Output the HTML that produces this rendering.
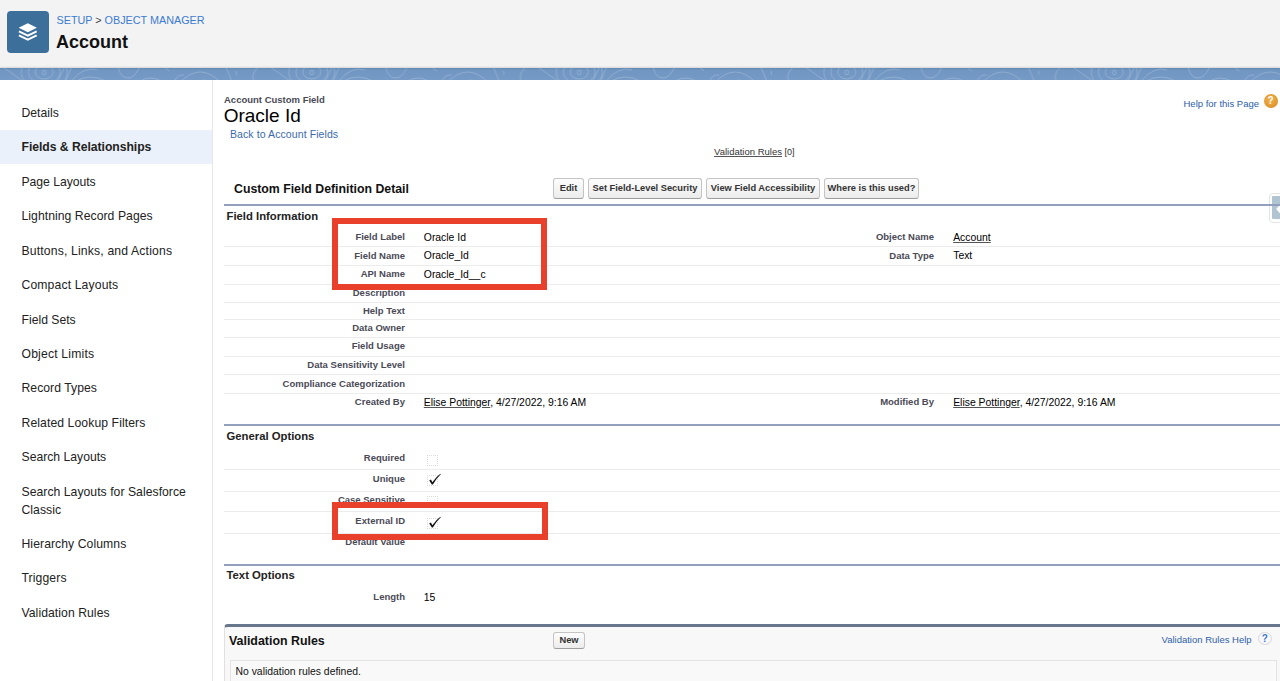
<!DOCTYPE html>
<html><head><meta charset="utf-8">
<style>
*{margin:0;padding:0;box-sizing:border-box}
html,body{width:1280px;height:681px;overflow:hidden;background:#fff;font-family:"Liberation Sans",sans-serif;color:#000}
.abs{position:absolute;white-space:nowrap}
#hdr{position:absolute;left:0;top:0;width:1280px;height:68px;background:#f3f3f3}
#icon{position:absolute;left:7px;top:11px;width:42px;height:42px;border-radius:4px;background:#3d6f9b}
#crumb{left:56.5px;top:14px;font-size:10.8px;color:#3b7bd0}
#crumb span{color:#444}
#title{left:56px;top:31.5px;font-size:18px;font-weight:bold;color:#111}
#band{position:absolute;left:0;top:68px;width:1280px;height:12px;box-shadow:0 -1px 1.5px rgba(0,0,0,0.12);background:linear-gradient(#6488b4,#7096c2 2px,#759ac5);overflow:hidden}
#nav{position:absolute;left:0;top:80px;width:213px;height:601px;border-right:1px solid #e6e6e6;background:#fff}
.ni{position:absolute;left:21.5px;font-size:12.2px;color:#222;white-space:nowrap;line-height:18px}
#sel{position:absolute;left:0;top:50px;width:212px;height:34px;background:#ebf1fb}
.lbl{position:absolute;font-size:9.5px;font-weight:bold;color:#4a4a56;text-align:right;white-space:nowrap}
.val{position:absolute;font-size:10.4px;color:#000;white-space:nowrap}
.rl{position:absolute;left:224px;width:1056px;height:1px;background:#ececec}
.btn{position:absolute;top:178px;height:20.5px;border:1px solid #c4c4c4;border-bottom-color:#9e9e9e;border-radius:3px;background:linear-gradient(#fdfdfd,#ececec);font-size:9.3px;font-weight:bold;color:#333;text-align:center;line-height:18px;white-space:nowrap}
.sec{position:absolute;font-size:11.3px;font-weight:bold;color:#222;white-space:nowrap}
.bl{position:absolute;left:224px;width:1056px;height:2px;background:#90a0bd;z-index:2}
.cb{position:absolute;width:11px;height:11px;border:1px dotted #dadada}
.red{position:absolute;border:6px solid #e8402a}
a,.u{text-decoration:underline;text-decoration-color:#555}
</style></head><body>
<div id="hdr">
  <div id="icon">
    <svg width="42" height="42" viewBox="0 0 42 42" style="position:absolute;left:0;top:0">
      <path d="M20.8 12.2 L29.9 16.7 L20.8 21.2 L11.7 16.7 Z" fill="#fff"/>
      <path d="M11.9 20.3 L20.8 24.7 L29.7 20.3" fill="none" stroke="#fff" stroke-width="1.9"/>
      <path d="M11.9 24.3 L20.8 28.7 L29.7 24.3" fill="none" stroke="#fff" stroke-width="1.9"/>
    </svg>
  </div>
  <div id="crumb" class="abs">SETUP <span>&gt;</span> OBJECT MANAGER</div>
  <div id="title" class="abs">Account</div>
</div>
<div id="band"><svg width="1280" height="12" style="position:absolute;left:0;top:0"><defs><pattern id="sw" x="44.25" y="0" width="267.5" height="12" patternUnits="userSpaceOnUse"><g fill="none" stroke="rgba(255,255,255,0.22)" stroke-width="0.9"><ellipse cx="0" cy="4.5" rx="1.8" ry="2.3"/><ellipse cx="0" cy="4" rx="9" ry="7"/><ellipse cx="0" cy="4" rx="16" ry="12"/><ellipse cx="0" cy="4" rx="23" ry="18"/>
<ellipse cx="267.5" cy="4.5" rx="1.8" ry="2.3"/><ellipse cx="267.5" cy="4" rx="9" ry="7"/><ellipse cx="267.5" cy="4" rx="16" ry="12"/><ellipse cx="267.5" cy="4" rx="23" ry="18"/>
<path d="M14 12 L20 0 M22 12 L27 0 M28 12 Q40 -2 53 2 M32 13 Q46 5 61 13 M74 -1 Q76 10 84 10 Q90 10 95 0 M96 13 Q106 7 117 13 M121 0 L125 3 M130 13 Q134 6 140 7 M136 14 Q156 -6 176 14 M150 16 Q160 8 168 16 M182 0 L187 12 M192 3 L192 7 M213 0 Q207 6 209 12 M226 -1 L246 13"/></g></pattern></defs><rect width="1280" height="12" fill="url(#sw)"/></svg></div>
<div id="nav">
  <div id="sel"></div>
  <div class="ni" style="top:24px;letter-spacing:0.01px">Details</div>
  <div class="ni" style="top:58px;font-weight:bold;letter-spacing:-0.04px">Fields &amp; Relationships</div>
  <div class="ni" style="top:93px;letter-spacing:-0.04px">Page Layouts</div>
  <div class="ni" style="top:127px;letter-spacing:0.05px">Lightning Record Pages</div>
  <div class="ni" style="top:162px;letter-spacing:0.16px">Buttons, Links, and Actions</div>
  <div class="ni" style="top:196px;letter-spacing:0.13px">Compact Layouts</div>
  <div class="ni" style="top:231px;letter-spacing:0px">Field Sets</div>
  <div class="ni" style="top:265px;letter-spacing:0.18px">Object Limits</div>
  <div class="ni" style="top:299px;letter-spacing:0.04px">Record Types</div>
  <div class="ni" style="top:334px;letter-spacing:0.09px">Related Lookup Filters</div>
  <div class="ni" style="top:368px;letter-spacing:0px">Search Layouts</div>
  <div class="ni" style="top:403px;letter-spacing:0.04px">Search Layouts for Salesforce<br>Classic</div>
  <div class="ni" style="top:455px;letter-spacing:0.07px">Hierarchy Columns</div>
  <div class="ni" style="top:489px;letter-spacing:0.11px">Triggers</div>
  <div class="ni" style="top:524px;letter-spacing:0.06px">Validation Rules</div>
</div>

<!-- main -->
<div class="abs" style="left:224px;top:94px;font-size:9.5px;font-weight:bold;color:#4a4a56">Account Custom Field</div>
<div class="abs" style="left:223.7px;top:105px;font-size:19px;color:#000">Oracle Id</div>
<div class="abs" style="left:230px;top:128px;font-size:10.5px;letter-spacing:0.09px;color:#3a6aae">Back to Account Fields</div>
<div class="abs" style="left:1183.5px;top:98px;font-size:9.5px;color:#2c60a8">Help for this Page</div>
<div class="abs" style="left:1263.5px;top:93.7px;width:14px;height:14px;border-radius:50%;background:radial-gradient(circle at 45% 40%,#f2b04a,#e39a30 60%,#c9781a);color:#fff;font-size:10px;font-weight:bold;text-align:center;line-height:14px">?</div>
<div class="abs" style="left:714px;top:146px;font-size:9.5px;color:#333"><span class="u">Validation Rules</span> <span style="font-size:9px">[0]</span></div>

<div class="sec" style="left:234px;top:181.5px;font-size:12.3px;color:#111">Custom Field Definition Detail</div>
<div class="btn" style="left:553px;width:31px">Edit</div>
<div class="btn" style="left:588px;width:114px">Set Field-Level Security</div>
<div class="btn" style="left:706px;width:114px">View Field Accessibility</div>
<div class="btn" style="left:824px;width:95px">Where is this used?</div>
<div class="bl" style="top:204px"></div>

<div style="position:absolute;left:1268.5px;top:192.5px;width:14px;height:30px;border:1px solid #e4e4e4;border-radius:4px;background:#fff"></div>
<div style="position:absolute;left:1272px;top:196px;width:10px;height:23px;background:#b1c4d2;border-radius:1px"></div>
<svg style="position:absolute;left:1272px;top:196px" width="8" height="23"><path d="M8 8.5 L4.2 13 L8 17.5 Z" fill="#fff"/></svg>
<div class="sec" style="left:226.5px;top:210px">Field Information</div>

<div class="lbl" style="right:875px;top:231.4px">Field Label</div>
<div class="lbl" style="right:875px;top:249.5px">Field Name</div>
<div class="lbl" style="right:875px;top:268.1px">API Name</div>
<div class="lbl" style="right:875px;top:286.5px">Description</div>
<div class="lbl" style="right:875px;top:304.5px">Help Text</div>
<div class="lbl" style="right:875px;top:322.2px">Data Owner</div>
<div class="lbl" style="right:875px;top:340.4px">Field Usage</div>
<div class="lbl" style="right:875px;top:359.1px">Data Sensitivity Level</div>
<div class="lbl" style="right:875px;top:377.6px">Compliance Categorization</div>
<div class="lbl" style="right:875px;top:395.7px">Created By</div>
<div class="rl" style="top:246px"></div>
<div class="rl" style="top:265px"></div>
<div class="rl" style="top:284px"></div>
<div class="rl" style="top:302px"></div>
<div class="rl" style="top:319px"></div>
<div class="rl" style="top:337px"></div>
<div class="rl" style="top:356px"></div>
<div class="rl" style="top:374px"></div>
<div class="rl" style="top:393px"></div>
<div class="val" style="left:423.8px;top:232.3px">Oracle Id</div>
<div class="val" style="left:423.8px;top:250.4px">Oracle_Id</div>
<div class="val" style="left:423.8px;top:269px">Oracle_Id__c</div>
<div class="val" style="left:423.8px;top:396.6px"><span class="u">Elise Pottinger</span>, 4/27/2022, 9:16 AM</div>
<div class="lbl" style="right:346px;top:231.4px">Object Name</div>
<div class="lbl" style="right:346px;top:249.5px">Data Type</div>
<div class="lbl" style="right:346px;top:395.7px">Modified By</div>
<div class="val" style="left:953.2px;top:232.3px"><span class="u">Account</span></div>
<div class="val" style="left:953.2px;top:250.4px">Text</div>
<div class="val" style="left:953.2px;top:396.6px"><span class="u">Elise Pottinger</span>, 4/27/2022, 9:16 AM</div>
<div class="red" style="left:332px;top:217.5px;width:215px;height:72.5px"></div>
<div class="bl" style="top:424px"></div>
<div class="sec" style="left:226.5px;top:429.8px">General Options</div>
<div class="lbl" style="right:875px;top:452.2px">Required</div>
<div class="lbl" style="right:875px;top:473.1px">Unique</div>
<div class="lbl" style="right:875px;top:494.0px">Case Sensitive</div>
<div class="lbl" style="right:875px;top:515.2px">External ID</div>
<div class="lbl" style="right:875px;top:536.2px">Default Value</div>
<div class="rl" style="top:469px"></div>
<div class="rl" style="top:491px"></div>
<div class="rl" style="top:511px"></div>
<div class="rl" style="top:533px"></div>
<div class="cb" style="left:427px;top:454.5px"></div>
<div class="cb" style="left:427px;top:475.4px"></div>
<svg class="abs" style="left:427px;top:473.4px" width="16" height="14" viewBox="0 0 16 14"><path d="M2.2 7.6 L3.9 6.6 L5.4 9.3 Q8.8 4 13.4 0.8 L13.8 1.3 Q9.6 5.2 5.9 11.5 L4.9 11.5 Z" fill="#111"/></svg>
<div class="cb" style="left:427px;top:496.3px"></div>
<div class="cb" style="left:427px;top:517.5px"></div>
<svg class="abs" style="left:427px;top:515.5px" width="16" height="14" viewBox="0 0 16 14"><path d="M2.2 7.6 L3.9 6.6 L5.4 9.3 Q8.8 4 13.4 0.8 L13.8 1.3 Q9.6 5.2 5.9 11.5 L4.9 11.5 Z" fill="#111"/></svg>
<div class="red" style="left:332px;top:502px;width:216px;height:37.5px"></div>
<div class="bl" style="top:564px"></div>
<div class="sec" style="left:226.5px;top:569px">Text Options</div>
<div class="lbl" style="right:875px;top:591.2px">Length</div>
<div class="val" style="left:423.8px;top:592px">15</div>
<div style="position:absolute;left:223.5px;top:623.5px;width:1060px;height:62px;background:#f8f8f8;border-top:3px solid #68768c;border-left:1px solid #e0e0e0;border-radius:4px 0 0 0"></div>
<div class="sec" style="left:229px;top:634px;font-size:12.4px;color:#111">Validation Rules</div>
<div class="btn" style="left:553px;top:632px;width:32px;height:17px;line-height:15px">New</div>
<div class="abs" style="left:1161.5px;top:633.6px;font-size:9.5px;color:#2f62a8">Validation Rules Help</div>
<div class="abs" style="left:1258px;top:631.5px;width:13.5px;height:13.5px;border-radius:50%;border:1px solid #d9d9d9;background:radial-gradient(circle at 50% 35%,#fff,#eef0f3);color:#3e78cc;font-size:10px;font-weight:bold;text-align:center;line-height:11.5px">?</div>
<div style="position:absolute;left:230px;top:660px;width:1047px;height:30px;background:#f9f9f9;border:1px solid #e3e3e3"></div>
<div class="abs" style="left:235.5px;top:665.5px;font-size:10.4px;color:#111">No validation rules defined.</div>
</body></html>
